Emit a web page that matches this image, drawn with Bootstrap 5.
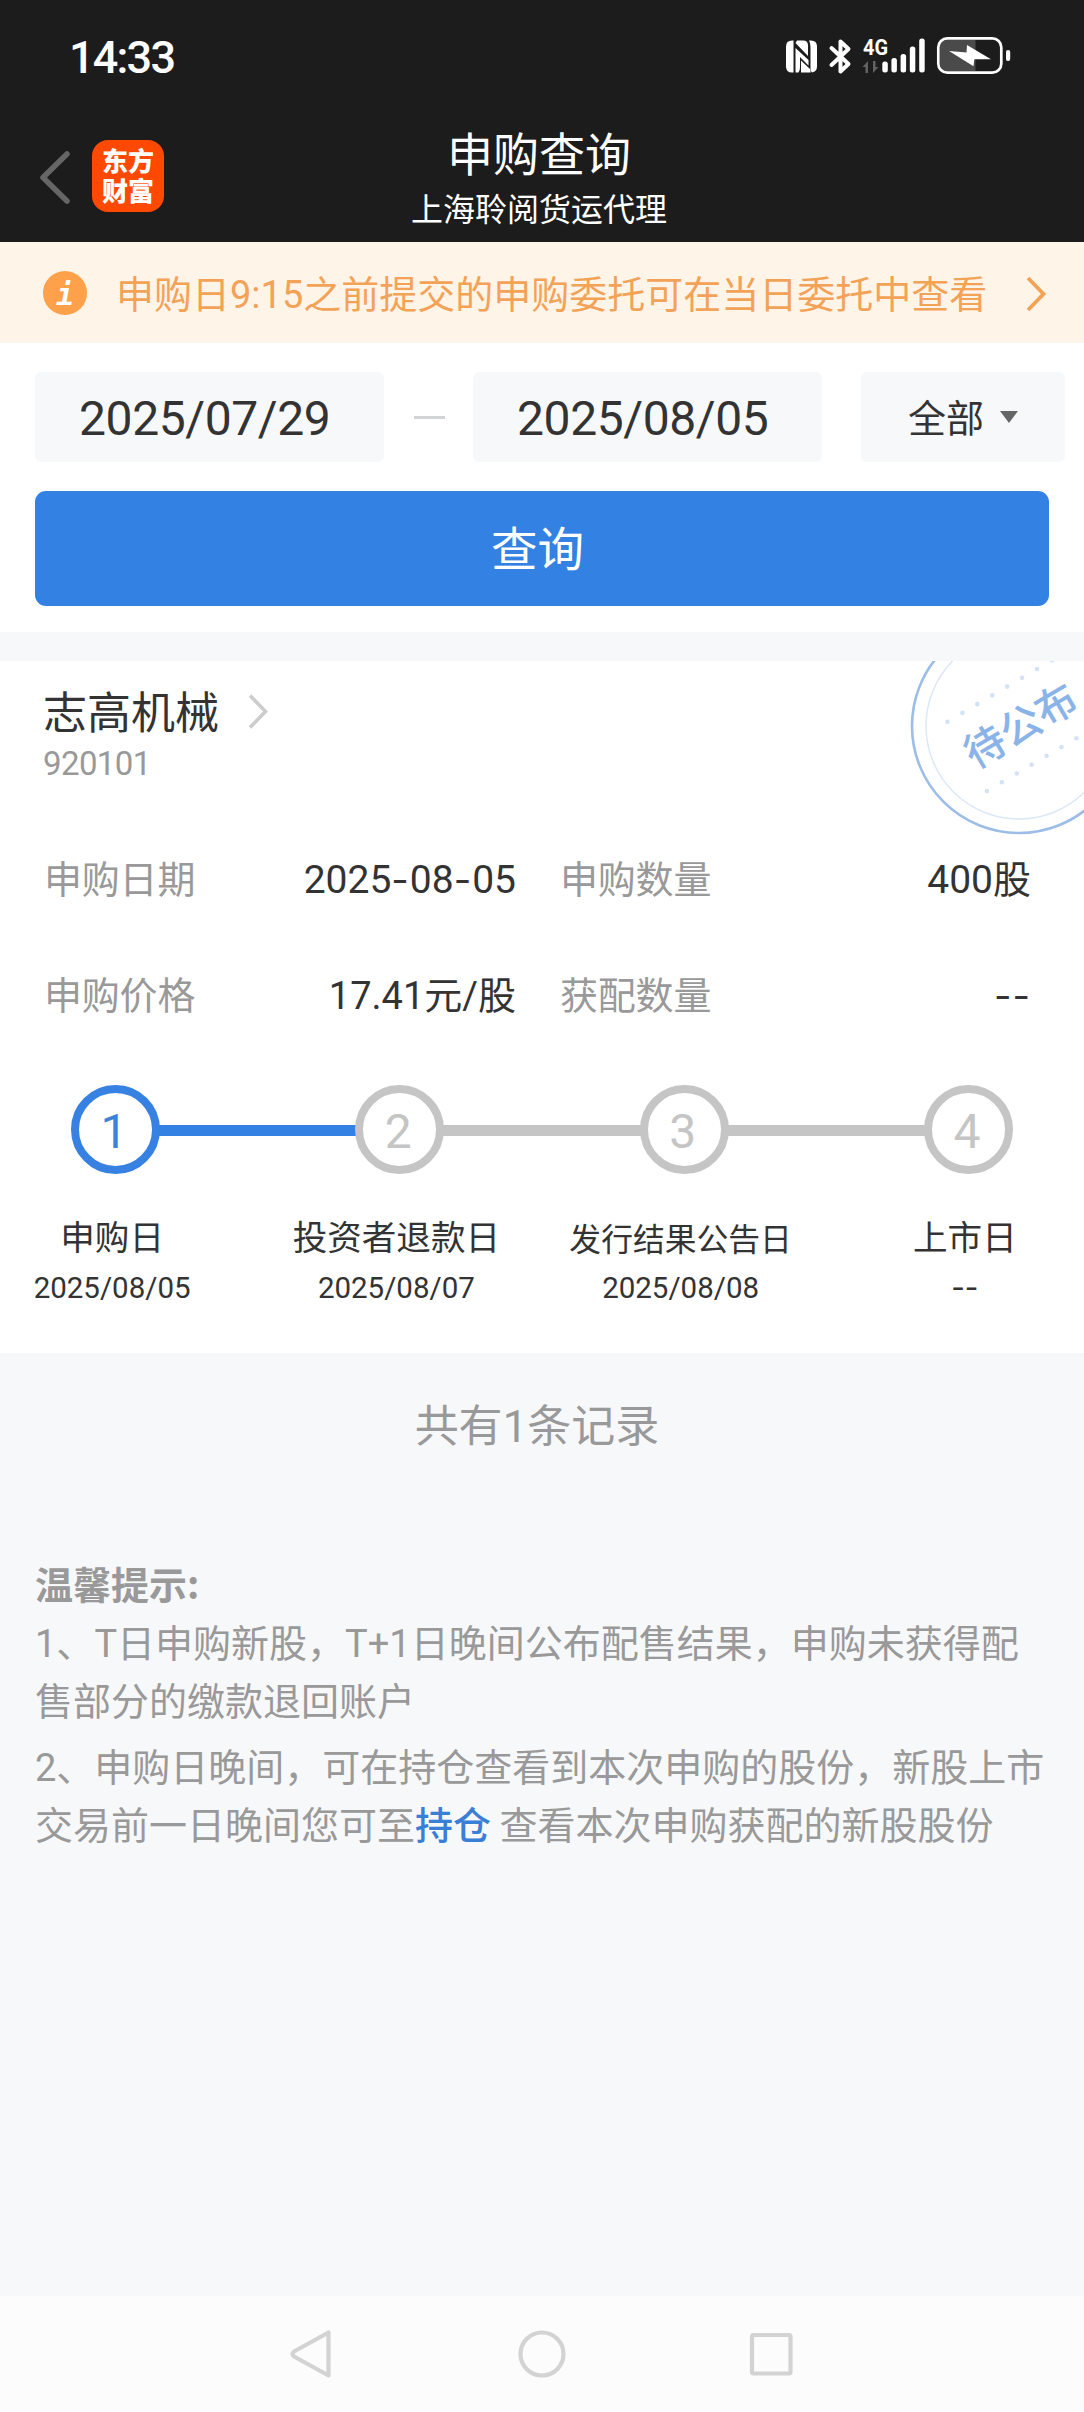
<!DOCTYPE html>
<html lang="zh-CN">
<head>
<meta charset="utf-8">
<meta name="viewport" content="width=device-width, initial-scale=1">
<title>申购查询</title>
<link href="https://cdn.jsdelivr.net/npm/bootstrap@5.3.0/dist/css/bootstrap.min.css" rel="stylesheet">
<style>
  body { font-family: "Noto Sans CJK SC", "Noto Sans", sans-serif; background: #f7f8fa; color: #333; width: 1084px; height: 2412px; overflow: hidden; font-size: 38px; line-height: 58px; }
  svg { display: block; flex: none; }
  .num { font-family: Roboto, "Noto Sans CJK SC", sans-serif; line-height: 0; }
  .topbar { background: #1c1c1c; height: 242px; color: #fff; }
  .status { height: 108px; padding-left: 69px; padding-right: 68px; }
  .clock { font-size: 45px; font-weight: 500; line-height: 108px; letter-spacing: -1.8px; }
  .apphead { height: 134px; display: grid; grid-template-columns: 1fr auto 1fr; width: 1078px; }
  .back { padding: 32px 0 0 38px; gap: 20px; }
  .logo { width: 72px; height: 72px; border-radius: 16px; background: #ff4800; font-size: 26px; font-weight: 900; line-height: 30px; padding-top: 5px; }
  .ttl { font-size: 46px; line-height: 60px; margin-top: 13px; }
  .sub { font-size: 32px; line-height: 44px; margin-top: 4px; }
  .notice { height: 101px; background: #fff4e8; color: #f3a358; padding: 0 37px 0 43px; }
  .notice .msg { margin-left: 29px; position: relative; top: -1px; }
  .query { height: 289px; padding: 29px 0 0 35px; }
  .field { height: 90px; border-radius: 6px; background: #f7f8fa; }
  .date { width: 349px; font-size: 48px; padding-left: 44px; line-height: 84px; letter-spacing: -.4px; }
  .dash { width: 31px; height: 3px; background: #d3d4d7; margin: 0 28px 0 30px; }
  .pick { width: 204px; margin-left: 39px; line-height: 87px; padding-left: 47px; }
  .btn-query { width: 1014px; height: 115px; margin-top: 29px; border: 0; border-radius: 11px; background: #3381e3; color: #fff; font-size: 46.5px; line-height: 105px; padding: 0 9px 6px 0; display: block; }
  .result { margin-top: 29px; height: 692px; position: relative; overflow: hidden; }
  .stamp { position: absolute; right: 0; top: 0; }
  .stock { font-size: 44px; line-height: 60px; padding: 19px 0 0 43px; gap: 29px; }
  .code { font-size: 33px; line-height: 44px; color: #999; padding-left: 43px; margin-top: -1px; letter-spacing: -.6px; }
  .facts { margin-top: 65px; }
  .fact { line-height: 58px; height: 58px; margin-bottom: 58px; white-space: nowrap; }
  .fact .lab { color: #999; letter-spacing: -.2px; }
  .fact .num { font-size: 39px; }
  .fact .pr { font-size: 38px; }
  .c1 { padding-left: 44px; width: 516px; }
  .c2 { padding-left: 44px; width: 515px; }
  .hy { font-family: Inter, sans-serif; line-height: 0; }
  .fact .hy { letter-spacing: 1px; }
  .steps { margin: 63px 71px 0; height: 89px; }
  .dot { width: 89px; height: 89px; border: 8.5px solid #c5c5c5; border-radius: 50%; color: #c5c5c5; font-size: 48px; font-weight: 400; line-height: 68px; text-align: center; flex: none; padding-right: 3px; }
  .dot.on { border-color: #3681e2; color: #3f81d6; }
  .bar { flex: 1; height: 11px; background: #c5c5c5; margin: 2px -2px 0; }
  .bar.on { background: #3381e3; }
  .caps { margin: 38px -23px 0 -30px; }
  .cap { width: 284.3px; text-align: center; font-size: 34.6px; line-height: 46px; }
  .cap .sm7 { font-size: 31.8px; line-height: 0; position: relative; top: 1px; }
  .cap small { display: block; font-size: 29.5px; line-height: 40px; margin-top: 7px; }
  .count { font-size: 44px; color: #999; text-align: center; line-height: 60px; padding-top: 40px; padding-right: 10px; height: 201px; }
  .tips { color: #999; padding-left: 35px; white-space: nowrap; }
  .tips p { margin: 0 0 8px; }
  .tips a { color: #3a7fd6; font-weight: 500; text-decoration: none; }
  .sysnav { height: 116px; background: #fcfcfc; }
</style>
</head>
<body class="d-flex flex-column">
<header class="topbar">
  <div class="status d-flex justify-content-between">
    <div class="clock"><span class="num">14:33</span></div>
    <svg width="236" height="108" viewBox="780 0 236 108" fill="#fff">
      <path d="M793.500 40.500v32h-1.500q-6 0-6-6v-20q0-6 6-6z"/>
      <path d="M797 40.500h6q5 0 5 5v10.500L795.500 43zM795.500 48l13 12v5.500L800 57v10q0 4-1.500 5.500h-3zM801 60.500l9.500 9v3h-9.500z"/>
      <path d="M811 40.500q6 0 6 6v20q0 5-5 6q-1.500-1-1.500-4V47q0-4-1.500-6.500z"/>
      <path d="M831.500 48l17 16-8 7.500V41.500l8 7.500-17 16" fill="none" stroke="#fff" stroke-width="4" stroke-linejoin="round" stroke-linecap="round"/>
      <text x="863" y="55" font-size="22" font-weight="700" font-family="Roboto" textLength="25" lengthAdjust="spacingAndGlyphs">4G</text>
      <path d="M868 73V61l-5.500 6h3v6zM873 61v12l5.500-6h-3v-6z" fill="#626262"/>
      <rect x="882.300" y="61.500" width="5.500" height="11" rx="2.500"/>
      <rect x="891.400" y="58" width="5.500" height="14.500" rx="2.500"/>
      <rect x="900.600" y="54" width="5.500" height="18.500" rx="2.500"/>
      <rect x="909.800" y="46.500" width="5.500" height="26" rx="2.500"/>
      <rect x="919.200" y="38.500" width="5.500" height="34" rx="2.500"/>
      <path d="M947 40h28.500v31H947q-7 0-7-7V47q0-7 7-7z" fill="#4a4a4a"/>
      <rect x="938.300" y="38.300" width="63" height="34.400" rx="9" fill="none" stroke="#fff" stroke-width="2.700"/>
      <rect x="1006" y="50" width="4.200" height="11" rx="2"/>
      <path d="M949 51l17.500 1.500 .5-7.500 24 14.300-16.700 0-.8 7z"/>
    </svg>
  </div>
  <div class="apphead">
    <div class="back d-flex">
      <svg width="34" height="72" viewBox="0 0 34 72"><path d="M29 14L5 37.500 29 61" fill="none" stroke="#666" stroke-width="5.500" stroke-linejoin="round" stroke-linecap="round"/></svg>
      <div class="logo text-center">东方<br>财富</div>
    </div>
    <div class="text-center">
      <div class="ttl">申购查询</div>
      <div class="sub">上海聆阅货运代理</div>
    </div>
    <div></div>
  </div>
</header>

<div class="notice d-flex align-items-center">
  <svg width="44" height="44" viewBox="0 0 44 44"><circle cx="22" cy="22" r="22" fill="#ffa04a"/><text x="22" y="34" text-anchor="middle" font-family="DejaVu Sans Mono" font-weight="700" font-style="oblique" font-size="30" fill="#fff">i</text></svg>
  <div class="msg">申购日<span class="num">9:15</span>之前提交的申购委托可在当日委托中查看</div>
  <svg class="ms-auto" width="22" height="38" viewBox="0 0 22 38"><path d="M3 4l15.500 16L3 36" fill="none" stroke="#f3a358" stroke-width="3.800"/></svg>
</div>

<section class="query bg-white">
  <div class="d-flex align-items-center">
    <div class="field date"><span class="num">2025/07/29</span></div>
    <div class="dash"></div>
    <div class="field date"><span class="num">2025/08/05</span></div>
    <div class="field pick d-flex">全部
      <svg class="mt-auto mb-auto ms-3" width="18" height="12" viewBox="0 0 18 12"><path d="M0 0h18L9 12z" fill="#666"/></svg>
    </div>
  </div>
  <button class="btn btn-query" type="button">查询</button>
</section>

<section class="result bg-white">
  <svg class="stamp" width="184" height="180" viewBox="900 661 184 180">
    <g fill="none"><circle cx="1019" cy="726" r="107" stroke="#9cbde8" stroke-width="2.600"/><circle cx="1019" cy="726" r="93" stroke="#dce8f6" stroke-width="1.500"/></g>
    <g stroke="#d3e2f5" stroke-width="4.600" stroke-linecap="round" stroke-dasharray="0 17.310">
      <path d="M947.500 721.700L1051.940 660.240"/>
      <path d="M986.900 791L1091.340 729.500"/>
    </g>
    <text transform="translate(1020.500 725.500) rotate(-30.500)" text-anchor="middle" y="15" font-size="41" font-weight="500" fill="#8ab3e8">待公布</text>
  </svg>
  <div class="stock d-flex align-items-center">志高机械
    <svg width="22" height="38" viewBox="0 0 22 38"><path d="M2 4.500l15.500 16L2 36.500" fill="none" stroke="#ccc" stroke-width="3.500"/></svg>
  </div>
  <div class="code"><span class="num">920101</span></div>
  <div class="facts">
    <div class="fact d-flex">
      <div class="c1 d-flex justify-content-between"><span class="lab">申购日期</span><span><span class="num">2025</span><span class="hy">-</span><span class="num">08</span><span class="hy">-</span><span class="num">05</span></span></div>
      <div class="c2 d-flex justify-content-between"><span class="lab">申购数量</span><span><span class="num">400</span>股</span></div>
    </div>
    <div class="fact d-flex">
      <div class="c1 d-flex justify-content-between"><span class="lab">申购价格</span><span><span class="num pr">17.41</span>元<span class="num pr">/</span>股</span></div>
      <div class="c2 d-flex justify-content-between"><span class="lab">获配数量</span><span><span class="hy">--</span></span></div>
    </div>
  </div>
  <div class="steps d-flex align-items-center">
    <div class="dot on"><span class="num">1</span></div><div class="bar on"></div>
    <div class="dot"><span class="num">2</span></div><div class="bar"></div>
    <div class="dot"><span class="num">3</span></div><div class="bar"></div>
    <div class="dot"><span class="num">4</span></div>
  </div>
  <div class="caps d-flex">
    <div class="cap">申购日<small><span class="num">2025/08/05</span></small></div>
    <div class="cap">投资者退款日<small><span class="num">2025/08/07</span></small></div>
    <div class="cap"><span class="sm7">发行结果公告日</span><small><span class="num">2025/08/08</span></small></div>
    <div class="cap">上市日<small><span class="hy">--</span></small></div>
  </div>
</section>

<div class="count">共有<span class="num">1</span>条记录</div>

<section class="tips">
  <div class="fw-bold">温馨提示:</div>
  <p><span class="num">1</span>、<span class="num">T</span>日申购新股，<span class="num">T+1</span>日晚间公布配售结果，申购未获得配<br>售部分的缴款退回账户</p>
  <p><span class="num">2</span>、申购日晚间，可在持仓查看到本次申购的股份，新股上市<br>交易前一日晚间您可至<a href="#">持仓</a> 查看本次申购获配的新股股份</p>
</section>

<nav class="sysnav mt-auto">
  <svg width="1084" height="116" viewBox="0 2296 1084 116" fill="none" stroke="#d3d3d3" stroke-width="4.200" stroke-linejoin="round">
    <path d="M328.500 2332.500v43L294 2356.500q-3-2.500 0-5z"/>
    <circle cx="542" cy="2354" r="21.500"/>
    <rect x="752" y="2335" width="38.500" height="38.500" rx="1.500"/>
  </svg>
</nav>
<script src="https://cdn.jsdelivr.net/npm/bootstrap@5.3.0/dist/js/bootstrap.bundle.min.js"></script>
</body>
</html>
